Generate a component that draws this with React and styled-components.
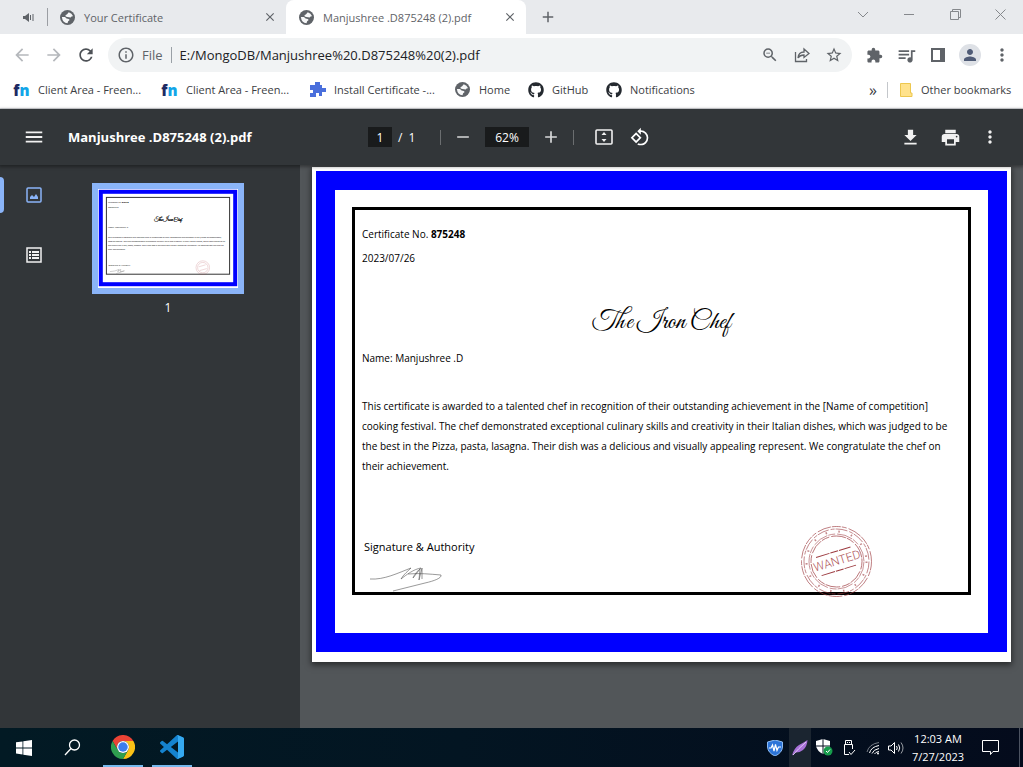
import React from "react";
import styled, { createGlobalStyle } from "styled-components";
import {
  MdArrowBack, MdArrowForward, MdRefresh, MdInfoOutline, MdZoomOut, MdStarBorder,
  MdExtension, MdQueueMusic, MdMoreVert, MdPerson, MdFileDownload, MdPrint,
  MdMenu, MdRotate90DegreesCcw, MdAdd, MdRemove, MdClose,
} from "react-icons/md";
import { FaGithub } from "react-icons/fa";

const GlobalStyle = createGlobalStyle`
  *, *::before, *::after { box-sizing: border-box; }
  body { margin: 0; font-family: "Open Sans", "Noto Sans", sans-serif; font-size: 11px; color: #3c4043; }
  button { font: inherit; color: inherit; background: none; border: 0; padding: 0; margin: 0; cursor: pointer; }
  input { font: inherit; color: inherit; border: 0; padding: 0; margin: 0; outline: 0; min-width: 0; }
  svg { display: block; flex: none; }
  p, h1 { margin: 0; }
`;

const Screen = styled.div`
  min-height: 100vh;
  display: flex;
  flex-direction: column;
`;

/* Browser tab strip */
const TabStrip = styled.header`
  display: flex;
  height: 34px;
  background: #e8eaed;
  color: #5f6368;
`;
const AudioTab = styled.button`
  width: 48px;
  height: 18px;
  margin-top: 8px;
  padding-left: 22px;
  border-right: 1px solid #9b9ea3;
`;
const Tab = styled.div`
  display: flex;
  align-items: center;
  width: ${(p) => (p.$active ? 240 : 238)}px;
  padding: 0 8px 0 ${(p) => (p.$active ? 13 : 12)}px;
  background: ${(p) => (p.$active ? "#fff" : "transparent")};
  border-radius: ${(p) => (p.$active ? "8px 8px 0 0" : "0 0 8px 0")};
`;
const TabLabel = styled.button`
  flex: 1;
  display: flex;
  align-items: center;
  gap: 9px;
  text-align: left;
  white-space: nowrap;
`;
const IconButton = styled.button`
  display: flex;
  align-items: center;
  justify-content: center;
  flex: none;
  width: ${(p) => p.$w || 32}px;
  height: ${(p) => p.$h || 32}px;
`;
const WindowControls = styled.div`
  display: flex;
  margin-left: auto;
  color: #85888c;
`;

/* Address bar */
const NavBar = styled.nav`
  display: flex;
  align-items: center;
  height: 42px;
  padding: 0 5px 0 6px;
  background: #fff;
  color: #5f6368;
`;
const Omnibox = styled.div`
  flex: 1;
  display: flex;
  align-items: center;
  height: 34px;
  margin: 0 6px;
  padding: 0 2px 0 9px;
  border-radius: 17px;
  background: #f1f3f4;
  font-size: 13px;
`;
const Scheme = styled.span`
  padding: 0 8px 0 7px;
  border-right: 1px solid #9aa0a6;
  line-height: 16px;
  white-space: nowrap;
`;
const UrlInput = styled.input`
  flex: 1;
  margin-left: 8px;
  background: transparent;
  color: #202124;
`;
const Avatar = styled.span`
  display: flex;
  align-items: center;
  justify-content: center;
  width: 22px;
  height: 22px;
  border-radius: 50%;
  background: #dee1e6;
  color: #4f5b76;
`;

/* Bookmarks */
const BookmarkBar = styled.nav`
  display: flex;
  align-items: center;
  height: 33px;
  padding: 0 9px 5px 13px;
  background: #fff;
  border-bottom: 1px solid #dadce0;
`;
const Bookmark = styled.a`
  display: flex;
  align-items: center;
  gap: 8px;
  width: ${(p) => (p.$w ? p.$w + "px" : "auto")};
  color: #3c4043;
  text-decoration: none;
  white-space: nowrap;
`;
const BookmarkIcon = styled.span`
  display: flex;
  justify-content: center;
  flex: none;
  width: 17px;
`;
const FnLetters = styled.span`
  color: #12a5e8;
  font-size: 15px;
  font-weight: 800;
  line-height: 22px;
  b { color: #1d2a63; font-weight: 800; }
`;
const Overflow = styled.button`
  margin: 0 11px 0 auto;
  padding-right: 10px;
  font-size: 16px;
  line-height: 16px;
  border-right: 1px solid #c4c7cb;
`;

/* PDF viewer */
const PdfToolbar = styled.div`
  position: relative;
  z-index: 1;
  display: flex;
  align-items: center;
  height: 56px;
  padding: 0 17px 0 18px;
  background: #323639;
  color: #f1f1f1;
  box-shadow: 0 1px 3px 1px rgba(0, 0, 0, 0.35);
`;
const ToolbarSide = styled.div`
  flex: 1 1 0;
  display: flex;
  align-items: center;
  justify-content: ${(p) => (p.$end ? "flex-end" : "flex-start")};
  gap: ${(p) => (p.$end ? 8 : 18)}px;
`;
const FileName = styled.h1`
  font-size: 13px;
  font-weight: 700;
  color: #fff;
  white-space: nowrap;
`;
const ToolbarCenter = styled.div`
  display: flex;
  align-items: center;
  font-size: 12px;
  color: #fff;
`;
const Pager = styled.label`
  display: flex;
  align-items: center;
  gap: 6px;
  width: 60px;
`;
const Field = styled.input`
  width: ${(p) => p.$w}px;
  height: 20px;
  margin: 0 ${(p) => p.$gap || 0}px;
  background: #191b1c;
  text-align: center;
`;
const Separator = styled.span`
  width: 1px;
  height: 15px;
  margin: 0 ${(p) => p.$right}px 0 ${(p) => p.$left}px;
  background: #6b6e70;
`;
const ViewButtons = styled.div`
  display: flex;
  gap: 4px;
`;
const PdfBody = styled.div`
  flex: 1;
  display: flex;
  background: #525659;
`;
const Sidebar = styled.aside`
  display: flex;
  flex: none;
  width: 300px;
  background: #323639;
`;
const SideTabs = styled.div`
  width: 68px;
`;
const SideTab = styled.button`
  display: flex;
  align-items: center;
  gap: 20px;
  width: 100%;
  height: 60px;
  color: ${(p) => (p.$active ? "#8ab4f8" : "#f1f1f1")};
  &::before {
    content: "";
    width: 4px;
    height: 36px;
    border-radius: 0 4px 4px 0;
    background: ${(p) => (p.$active ? "#8ab4f8" : "transparent")};
  }
`;
const Thumbs = styled.div`
  flex: 1;
  display: flex;
  flex-direction: column;
  align-items: center;
  padding: 18px 32px 0 0;
  color: #fff;
  font-size: 12px;
`;
const Thumb = styled.button`
  padding: 6px;
  margin-bottom: 5px;
  background: #8ab4f8;
`;
const Stage = styled.main`
  flex: 1;
  min-width: 0;
  padding: 2px 12px 66px;
`;
const Sheet = styled.article`
  padding: 4px 4px 10px;
  background: #fff;
  box-shadow: 0 2px 6px 1px rgba(0, 0, 0, 0.5);
  color: #000;
  font-size: 10px;
`;
const BlueFrame = styled.div`
  padding: 17px 17px 38px;
  border: 19px solid #0000ff;
`;
const Certificate = styled.div`
  padding: 12px 7px 0;
  border: 3px solid #000;
`;
const Line = styled.p`
  margin-top: ${(p) => p.$top || 0}px;
  line-height: 24px;
`;
const CompetitionName = styled.p`
  margin-top: 32px;
  font-family: "Great Vibes", "Liberation Serif", cursive;
  font-size: 26px;
  line-height: 40px;
  text-align: center;
`;
const Award = styled.p`
  margin-top: 26px;
  padding-right: 4px;
  line-height: 20px;
`;
const SignRow = styled.div`
  display: flex;
  justify-content: space-between;
  height: 66px;
  margin: 50px 89px 0 0;
`;
const Signature = styled.div`
  display: flex;
  flex-direction: column;
  gap: 6px;
  padding: 9px 0 0 2px;
  font-size: 11px;
  line-height: 24px;
`;

/* Desktop taskbar */
const Taskbar = styled.footer`
  display: flex;
  align-items: stretch;
  height: 39px;
  padding-right: 3px;
  background: linear-gradient(90deg, #021a24 0%, #031522 45%, #040b1c 100%);
  color: #fff;
`;
const TaskButton = styled.button`
  display: flex;
  align-items: center;
  justify-content: center;
  width: ${(p) => p.$w}px;
  margin-right: ${(p) => p.$gap || 0}px;
  background: ${(p) => (p.$lit ? "#1b2530" : "transparent")};
  border-bottom: ${(p) => (p.$open ? "2px solid #76b9ed" : "0")};
`;
const Tray = styled.div`
  display: flex;
  margin-left: auto;
  padding-right: 8px;
  border-right: 1px solid #4c5361;
`;
const Clock = styled.time`
  width: 62px;
  padding-top: 2px;
  font-size: 11px;
  line-height: 18px;
  text-align: center;
  white-space: nowrap;
`;

const Globe = () => (
  <svg width="15" height="15" viewBox="0 0 24 24">
    <circle cx="12" cy="12" r="12" fill="#5f6368" />
    <path d="M14 3.500Q19 5 21 10H19L17 12L12 11Q8 11 9 8L11 7ZM3 11H8Q10 14 14 14.500L15.500 16L13 18L12 21Q4 20 3 11Z" fill="#f6f7f8" />
  </svg>
);

const FnLogo = () => <FnLetters aria-hidden="true"><b>f</b>n</FnLetters>;

const Stamp = () => (
  <svg width="71" height="71" viewBox="0 0 71 71" fill="none" stroke="#9c3a3f">
    <circle cx="35.5" cy="35.5" r="35" strokeDasharray="9 1 5 2 14 1" opacity=".65" />
    <circle cx="35.5" cy="35.5" r="32.500" strokeDasharray="12 2 4 1" opacity=".6" />
    <circle cx="35.5" cy="35.5" r="30" strokeWidth="2" strokeDasharray="1.500 11.500" opacity=".6" />
    <circle cx="35.5" cy="35.5" r="27.500" strokeDasharray="16 1 7 2" opacity=".55" />
    <circle cx="35.5" cy="35.5" r="25.500" strokeDasharray="8 2 15 1" opacity=".7" />
    <g transform="rotate(-17 36 35)">
      <path d="M17 25.500H53M17 44.500H53" strokeDasharray="14 1 8 1" />
      <text x="36" y="39" textAnchor="middle" fontFamily="Roboto" fontWeight="300" fontSize="12" fill="#b0575b" stroke="none">WANTED</text>
    </g>
  </svg>
);

const Scribble = () => (
  <svg width="80" height="27" viewBox="0 0 80 27" fill="none" stroke="#555" strokeWidth=".600">
    <path d="M6 14C20 15 34 8 47 3C45 5 39 10 37 14C42 10 50 4 57 3C54 5 50 10 49 13L56 4L55 15L58 3V14M44 9C56 8 65 9 77 10C78 13 70 16 61 18L29 26" />
  </svg>
);

const Thumbnail = () => (
  <svg width="140" height="99" viewBox="0 0 700 495" aria-hidden="true">
    <rect width="700" height="495" fill="#fff" />
    <rect x="14" y="14" width="672" height="462" fill="#fff" stroke="#0000ff" strokeWidth="20" />
    <rect x="42" y="42" width="616" height="384" fill="none" stroke="#333" strokeWidth="5" />
    <g fontFamily="Open Sans" fontSize="10" fill="#000">
      <text x="50" y="71">Certificate No. <tspan fontWeight="700">875248</tspan></text>
      <text x="50" y="95">2023/07/26</text>
      <text x="350" y="162" textAnchor="middle" fontFamily="Great Vibes, Liberation Serif, cursive" fontSize="26" stroke="#000">The Iron Chef</text>
      <text x="50" y="195">Name: Manjushree .D</text>
      <text x="50" y="243">This certificate is awarded to a talented chef in recognition of their outstanding achievement in the [Name of competition]</text>
      <text x="50" y="263">cooking festival. The chef demonstrated exceptional culinary skills and creativity in their Italian dishes, which was judged to be</text>
      <text x="50" y="283">the best in the Pizza, pasta, lasagna. Their dish was a delicious and visually appealing represent. We congratulate the chef on</text>
      <text x="50" y="303">their achievement.</text>
      <text x="52" y="384" fontSize="11">Signature &amp; Authority</text>
    </g>
    <path d="M60 413Q86 412 106 402L98 414L114 402L112 414L132 409L90 424" fill="none" stroke="#888" strokeWidth="2" />
    <g fill="none" stroke="#b5474b" strokeWidth="2" opacity=".5">
      <circle cx="524" cy="393" r="34" />
      <circle cx="524" cy="393" r="26" />
      <path d="M504 389L538 379M508 408L544 398" />
    </g>
  </svg>
);

const ChromeLogo = () => (
  <svg width="24" height="24" viewBox="0 0 48 48">
    <path fill="#ea4335" d="M24 12H44.800A24 24 0 0 0 3.200 12L13.600 30A12 12 0 0 1 24 12Z" />
    <path fill="#fbc116" d="M34.400 30L24 48A24 24 0 0 0 44.800 12H24A12 12 0 0 1 34.400 30Z" />
    <path fill="#2f9e4f" d="M13.600 30L3.200 12A24 24 0 0 0 24 48L34.400 30A12 12 0 0 1 13.600 30Z" />
    <circle cx="24" cy="24" r="12" fill="#fff" />
    <circle cx="24" cy="24" r="9.500" fill="#3b7ded" />
  </svg>
);

const CodeLogo = () => (
  <svg width="24" height="24" viewBox="0 0 24 24">
    <path fill="#1583cf" d="M23.15 2.587L18.21.21a1.494 1.494 0 0 0-1.705.29l-9.46 8.63-4.12-3.128a.999.999 0 0 0-1.276.057L.327 7.261A1 1 0 0 0 .326 8.74L3.899 12 .326 15.26a1 1 0 0 0 .001 1.479L1.65 17.94a.999.999 0 0 0 1.276.057l4.12-3.128 9.46 8.63a1.492 1.492 0 0 0 1.704.29l4.942-2.377A1.5 1.5 0 0 0 24 20.06V3.939a1.5 1.5 0 0 0-.85-1.352zm-5.146 14.861L10.826 12l7.178-5.448v10.896z" />
    <path fill="#35a9f0" d="M18.200.200L23.150 2.590Q24 3 24 3.940V20.060Q24 21 23.150 21.400L18.200 23.800Q17.500 24 17 23.700Q18 23.500 18 22V2Q18 .500 17 .200Q17.600 0 18.200.200Z" />
  </svg>
);

const BOOKMARKS = [
  { label: "Client Area - Freen...", w: 148, icon: <FnLogo /> },
  { label: "Client Area - Freen...", w: 148, icon: <FnLogo /> },
  {
    label: "Install Certificate -...", w: 145,
    icon: (
      <svg width="17" height="17" viewBox="0 0 17 17" fill="#4a6fdc">
        <path d="M6 1H11V4H13V7H17V11H13V15H10V12H7V16H1V12H4V9H1V4H6Z" />
      </svg>
    ),
  },
  { label: "Home", w: 73, icon: <Globe /> },
  { label: "GitHub", w: 78, icon: <FaGithub size={16} color="#24292f" /> },
  { label: "Notifications", w: 0, icon: <FaGithub size={16} color="#24292f" /> },
];

export default function App() {
  return (
    <Screen>
      <GlobalStyle />
      <TabStrip>
        <AudioTab aria-label="Playing tab">
          <svg width="13" height="17" viewBox="0 0 13 17" fill="#5f6368">
            <path d="M1 7H3L7 4V13L3 10H1Z" />
            <path d="M8.500 6V11M11 5V12" stroke="#5f6368" fill="none" />
          </svg>
        </AudioTab>
        <Tab>
          <TabLabel><Globe />Your Certificate</TabLabel>
          <IconButton $w={16} aria-label="Close tab"><MdClose size={14} /></IconButton>
        </Tab>
        <Tab $active>
          <TabLabel><Globe />Manjushree .D875248 (2).pdf</TabLabel>
          <IconButton $w={16} aria-label="Close tab"><MdClose size={14} /></IconButton>
        </Tab>
        <IconButton $w={44} $h={34} aria-label="New tab"><MdAdd size={18} /></IconButton>
        <WindowControls>
          <IconButton $w={46} $h={28} aria-label="Search tabs">
            <svg width="12" height="12" viewBox="0 0 12 12" fill="none" stroke="currentColor"><path d="M1 4L6 9L11 4" /></svg>
          </IconButton>
          <IconButton $w={46} $h={28} aria-label="Minimize">
            <svg width="10" height="11" viewBox="0 0 10 11" fill="none" stroke="currentColor"><path d="M0 5.500H10" /></svg>
          </IconButton>
          <IconButton $w={46} $h={28} aria-label="Restore">
            <svg width="11" height="11" viewBox="0 0 11 11" fill="none" stroke="currentColor"><path d="M.500 2.500H8.500V10.500H.500ZM2.500 2.500V.500H10.500V8.500H8.500" /></svg>
          </IconButton>
          <IconButton $w={45} $h={28} aria-label="Close">
            <svg width="11" height="11" viewBox="0 0 11 11" fill="none" stroke="currentColor"><path d="M.500.500L10.500 10.500M10.500.500L.500 10.500" /></svg>
          </IconButton>
        </WindowControls>
      </TabStrip>

      <NavBar aria-label="Navigation">
        <IconButton aria-label="Back"><MdArrowBack size={20} color="#b5b8bc" /></IconButton>
        <IconButton aria-label="Forward"><MdArrowForward size={20} color="#b5b8bc" /></IconButton>
        <IconButton aria-label="Reload"><MdRefresh size={20} color="#4d5156" /></IconButton>
        <Omnibox>
          <MdInfoOutline size={18} />
          <Scheme>File</Scheme>
          <UrlInput aria-label="Address" defaultValue="E:/MongoDB/Manjushree%20.D875248%20(2).pdf" />
          <IconButton aria-label="Zoom"><MdZoomOut size={18} /></IconButton>
          <IconButton aria-label="Share">
            <svg width="16" height="16" viewBox="0 0 16 16" fill="none" stroke="currentColor" strokeWidth="1.300">
              <path d="M1.500 5V14.500H12.500V12M4 11Q4.500 5 10 5V2L15 6.500L10 10.500V8Q6 8 4 11Z" />
            </svg>
          </IconButton>
          <IconButton aria-label="Bookmark"><MdStarBorder size={18} /></IconButton>
        </Omnibox>
        <IconButton aria-label="Extensions"><MdExtension size={17} /></IconButton>
        <IconButton aria-label="Media"><MdQueueMusic size={21} /></IconButton>
        <IconButton aria-label="Side panel">
          <svg width="14" height="14" viewBox="0 0 14 14"><path fill="currentColor" fillRule="evenodd" d="M0 0H14V14H0ZM2 2V12H9V2Z" /></svg>
        </IconButton>
        <IconButton aria-label="Profile"><Avatar><MdPerson size={18} /></Avatar></IconButton>
        <IconButton aria-label="More"><MdMoreVert size={20} /></IconButton>
      </NavBar>

      <BookmarkBar aria-label="Bookmarks">
        {BOOKMARKS.map((b, i) => (
          <Bookmark key={i} href="#" $w={b.w}><BookmarkIcon>{b.icon}</BookmarkIcon>{b.label}</Bookmark>
        ))}
        <Overflow aria-label="More bookmarks">»</Overflow>
        <Bookmark href="#" $w={115}>
          <svg width="14" height="16" viewBox="0 0 14 16"><path d="M1.500 1.500H11.500V11H13V14.500H1.500Z" fill="#ffe28c" stroke="#edc74e" /></svg>
          Other bookmarks
        </Bookmark>
      </BookmarkBar>

      <PdfToolbar>
        <ToolbarSide>
          <IconButton aria-label="Menu"><MdMenu size={22} /></IconButton>
          <FileName>Manjushree .D875248 (2).pdf</FileName>
        </ToolbarSide>
        <ToolbarCenter>
          <Pager><Field $w={24} defaultValue="1" aria-label="Page number" /><span>/</span><span>1</span></Pager>
          <Separator $left={12} $right={6} />
          <IconButton aria-label="Zoom out"><MdRemove size={20} color="#c8c9ca" /></IconButton>
          <Field $w={44} $gap={6} defaultValue="62%" aria-label="Zoom level" />
          <IconButton aria-label="Zoom in"><MdAdd size={20} color="#d8d9da" /></IconButton>
          <Separator $left={6} $right={14} />
          <ViewButtons>
            <IconButton aria-label="Fit to page">
              <svg width="18" height="16" viewBox="0 0 18 16" fill="none" stroke="#f1f1f1" strokeWidth="1.600">
                <rect x="1" y="1" width="16" height="14" rx="1" />
                <path d="M9 3L11.500 6H6.500ZM9 13L11.500 10H6.500Z" fill="#f1f1f1" stroke="none" />
              </svg>
            </IconButton>
            <IconButton aria-label="Rotate"><MdRotate90DegreesCcw size={20} /></IconButton>
          </ViewButtons>
        </ToolbarCenter>
        <ToolbarSide $end>
          <IconButton aria-label="Download"><MdFileDownload size={21} /></IconButton>
          <IconButton aria-label="Print"><MdPrint size={21} /></IconButton>
          <IconButton aria-label="More actions"><MdMoreVert size={20} /></IconButton>
        </ToolbarSide>
      </PdfToolbar>

      <PdfBody>
        <Sidebar>
          <SideTabs>
            <SideTab $active aria-label="Thumbnails">
              <svg width="20" height="20" viewBox="0 0 20 20" fill="none" stroke="currentColor" strokeWidth="2">
                <rect x="3" y="3" width="14" height="14" rx="1" strokeWidth="1.500" />
                <path d="M6 14V12L8 10L10 12L12 9L14 12V14Z" fill="currentColor" stroke="none" />
              </svg>
            </SideTab>
            <SideTab aria-label="Outline">
              <svg width="20" height="20" viewBox="0 0 20 20" fill="none" stroke="currentColor" strokeWidth="1.500">
                <rect x="3" y="3" width="14" height="14" />
                <path d="M5 7H7M5 10H7M5 13H7M8 7H15M8 10H15M8 13H15" strokeWidth="2" />
              </svg>
            </SideTab>
          </SideTabs>
          <Thumbs>
            <Thumb aria-label="Page 1"><Thumbnail /></Thumb>
            <span>1</span>
          </Thumbs>
        </Sidebar>
        <Stage>
          <Sheet>
            <BlueFrame>
              <Certificate>
                <Line>Certificate No. <b>875248</b></Line>
                <Line>2023/07/26</Line>
                <CompetitionName>The Iron Chef</CompetitionName>
                <Line $top={4}>Name: Manjushree .D</Line>
                <Award>
                  This certificate is awarded to a talented chef in recognition of their outstanding
                  achievement in the [Name of competition] cooking festival. The chef demonstrated
                  exceptional culinary skills and creativity in their Italian dishes, which was judged
                  to be the best in the Pizza, pasta, lasagna. Their dish was a delicious and visually
                  appealing represent. We congratulate the chef on their achievement.
                </Award>
                <SignRow>
                  <Signature>Signature &amp; Authority<Scribble /></Signature>
                  <Stamp />
                </SignRow>
              </Certificate>
            </BlueFrame>
          </Sheet>
        </Stage>
      </PdfBody>

      <Taskbar>
        <TaskButton $w={48} aria-label="Start">
          <svg width="16" height="16" viewBox="0 0 16 16" fill="#fff"><path d="M0 2.300L6.500 1.400V7.500H0ZM7.300 1.300L16 0V7.500H7.300ZM0 8.400H6.500V14.500L0 13.600ZM7.300 8.400H16V16L7.300 14.700Z" /></svg>
        </TaskButton>
        <TaskButton $w={48} $gap={7} aria-label="Search">
          <svg width="17" height="17" viewBox="0 0 17 17" fill="none" stroke="#fff" strokeWidth="1.300"><circle cx="10.500" cy="6" r="5" /><path d="M7 9.500L1 16" /></svg>
        </TaskButton>
        <TaskButton $w={40} $gap={9} $open aria-label="Chrome"><ChromeLogo /></TaskButton>
        <TaskButton $w={40} $open aria-label="Visual Studio Code"><CodeLogo /></TaskButton>
        <Tray>
          <TaskButton $w={28} aria-label="Antivirus">
            <svg width="16" height="16" viewBox="0 0 16 16"><path d="M8 0L15.500 2V7Q15 13 8 16Q1 13 .500 7V2Z" fill="#2c74d8" stroke="#8dbcf5" /><path d="M2 8H4L5.500 5L7 11L8.500 4.500L10 10.500L11.500 7H14" fill="none" stroke="#fff" strokeWidth="1.200" /></svg>
          </TaskButton>
          <TaskButton $w={22} $lit aria-label="Feather">
            <svg width="16" height="16" viewBox="0 0 16 16"><path d="M0 15.500Q2 8 7 5Q11 3 15.500 0Q15 7 11 10Q7 13 3 12.500Z" fill="#a871d8" /><path d="M1 15Q6 9 14 2" stroke="#e3c8f7" fill="none" /></svg>
          </TaskButton>
          <TaskButton $w={26} aria-label="Security">
            <svg width="17" height="17" viewBox="0 0 17 17"><path d="M7 0L14 2V7Q13 12 7 15Q1 12 0 7V2Z" fill="#fff" /><path d="M7 0V15M0 7H14" stroke="#061020" /><circle cx="12" cy="12" r="4.500" fill="#169c4b" /><path d="M10 12L11.500 13.500L14 10.500" fill="none" stroke="#fff" /></svg>
          </TaskButton>
          <TaskButton $w={24} aria-label="USB">
            <svg width="14" height="17" viewBox="0 0 14 17" fill="none" stroke="#fff"><path d="M3.500 5.500V1.500H9.500V5.500M2.500 5.500H10.500V10M2.500 5.500V15.500H7M5.500 3V4M7.500 3V4M7 13L9 15.500L13 11" /></svg>
          </TaskButton>
          <TaskButton $w={24} aria-label="Network">
            <svg width="14" height="14" viewBox="0 0 14 14" fill="none" stroke="#fff"><path d="M1 11Q3 3 13 1.500" opacity=".45" /><path d="M3.500 12Q5 6 13 4.500M6 12.500Q7.500 8.500 13 7.500M8.500 13Q9.500 11 13 10.500" /><circle cx="12" cy="12.500" r="1" fill="#fff" stroke="none" /></svg>
          </TaskButton>
          <TaskButton $w={22} aria-label="Volume">
            <svg width="16" height="14" viewBox="0 0 16 14" fill="none" stroke="#fff"><path d="M.500 5H3L6.500 1.500V12.500L3 9H.500ZM8.500 5Q10 7 8.500 9M10.500 3.500Q13 7 10.500 10.500" /><path d="M13 1.500Q17 7 13 12.500" opacity=".6" /></svg>
          </TaskButton>
          <Clock>12:03 AM<br />7/27/2023</Clock>
          <TaskButton $w={42} aria-label="Notifications">
            <svg width="17" height="17" viewBox="0 0 17 17" fill="none" stroke="#fff"><path d="M.500 1.500H16.500V12.500H11L8.500 15.500V12.500H.500Z" /></svg>
          </TaskButton>
        </Tray>
      </Taskbar>
    </Screen>
  );
}
